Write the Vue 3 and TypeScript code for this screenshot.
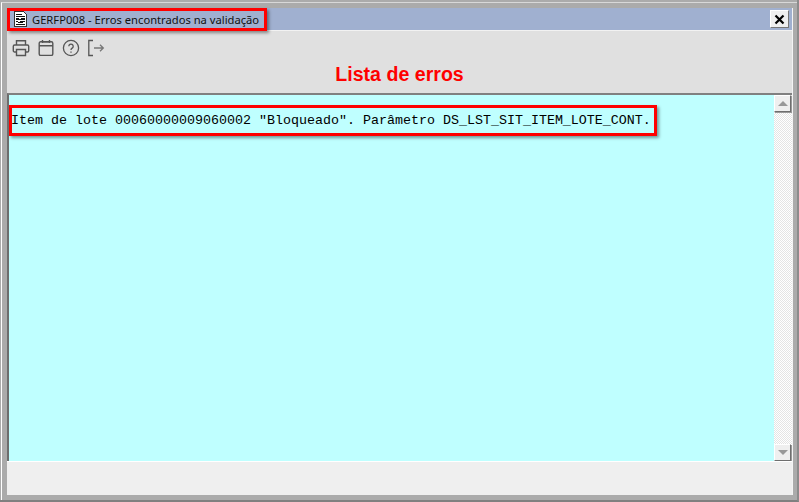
<script setup lang="ts">
const title = 'GERFP008 - Erros encontrados na validação'
const message = 'Item de lote 00060000009060002 "Bloqueado". Parâmetro DS_LST_SIT_ITEM_LOTE_CONT.'
</script>

<template>
  <div class="screen">
    <div class="frame">
      <div class="window">
        <header class="titlebar">
          <svg class="doc" width="13" height="16" viewBox="0 0 13 16" shape-rendering="crispEdges">
            <path d="M0.500 0.500H9.500L12.500 3.500V15.500H0.500Z" fill="#fff" stroke="#333" />
            <path d="M2 3.500h6M2 5.500h9M2 7.500h3M7 7.500h4M2 8.500h9M2 10.500h2M6 10.500h5M4 11.500h5M2 13.500h9" stroke="#111" stroke-width="1" />
          </svg>
          <span class="title-text">{{ title }}</span>
          <button class="close" aria-label="Fechar">
            <svg width="11" height="11" viewBox="0 0 11 11">
              <path d="M1.500 1.500l8 8M9.500 1.500l-8 8" stroke="#000" stroke-width="2.200" />
            </svg>
          </button>
        </header>
        <section class="tools">
          <div class="icons">
            <svg width="18" height="18" viewBox="0 0 18 18" fill="none" stroke="#555" stroke-width="1.400">
              <path d="M4.500 6V1.700h9V6M4.500 13H2.600A1.300 1.300 0 0 1 1.300 11.700V7.300A1.300 1.300 0 0 1 2.600 6h12.800a1.300 1.300 0 0 1 1.300 1.300v4.400a1.300 1.300 0 0 1-1.300 1.300H13.500" />
              <path d="M4.500 10.500h9v6h-9z" />
            </svg>
            <svg width="18" height="18" viewBox="0 0 18 18" fill="none" stroke="#555" stroke-width="1.400">
              <rect x="2.200" y="2.800" width="13.600" height="13.600" rx="1.500" />
              <path d="M2.200 6.800h13.600M5.500 1v3M12.500 1v3M5.500 2.800h7" />
            </svg>
            <svg width="18" height="18" viewBox="0 0 18 18" fill="none" stroke="#555" stroke-width="1.300">
              <circle cx="9" cy="9" r="7.600" />
              <path d="M6.800 7.200a2.200 2.200 0 1 1 3.400 1.900c-.8.500-1.200 1-1.200 1.900" />
              <path d="M9 12.400v1.300" />
            </svg>
            <svg width="18" height="18" viewBox="0 0 18 18" fill="none" stroke="#555" stroke-width="1.300">
              <path d="M6 1.500H1.800v15H6" />
              <path d="M7 9h9M13 5.800L16.300 9 13 12.200" stroke="#777" />
            </svg>
          </div>
          <h1 class="heading">Lista de erros</h1>
        </section>
        <main class="content">
          <p class="message">{{ message }}</p>
          <div class="scrollbar">
            <button class="arrow"><span class="tri up"></span></button>
            <div class="track"></div>
            <button class="arrow"><span class="tri down"></span></button>
          </div>
        </main>
        <footer class="status"></footer>
      </div>
    </div>
    <div class="mark mark-title"></div>
    <div class="mark mark-line"></div>
  </div>
</template>

<style>
html, body { margin: 0; padding: 0; background: #ababab; }
</style>

<style scoped>
.screen {
  position: relative;
  width: 799px;
  height: 502px;
  box-sizing: border-box;
  padding: 2px 0 0 1px;
  background: #ababab;
  border-right: 2px solid #8c8c8c;
  border-bottom: 2px solid #808080;
  overflow: hidden;
  font-family: "Liberation Sans", sans-serif;
}
.frame {
  height: 498px;
  box-sizing: border-box;
  padding: 5px 4px 5px 5px;
  border-left: 1px solid #fff;
  border-top: 1px solid #d8d8d8;
}
.window {
  display: flex;
  flex-direction: column;
  height: 487px;
  box-sizing: border-box;
  border-right: 1px solid #f4f4f4;
  background: #e0e0e0;
}
.titlebar {
  display: flex;
  align-items: center;
  height: 22px;
  flex: none;
  padding: 0 3px 0 7px;
  background: #a0b0d0;
  border-bottom: 1px solid #f2f2f2;
}
.doc { flex: none; margin-right: 5px; }
.title-text {
  font: 11.200px "Noto Sans", sans-serif;
  color: #111;
  white-space: nowrap;
}
.close {
  margin-left: auto;
  width: 19px;
  height: 18px;
  padding: 0;
  display: flex;
  align-items: center;
  justify-content: center;
  background: #efefef;
  border: 1px solid;
  border-color: #fff #777 #777 #fff;
}
.tools {
  flex: none;
  height: 62px;
  box-sizing: border-box;
  padding: 8px 5px 0 5px;
}
.icons { display: flex; gap: 7px; height: 18px; }
.heading {
  margin: 6px 0 0;
  text-align: center;
  font: bold 19.600px "Liberation Sans", sans-serif;
  color: #f00;
  line-height: 22px;
}
.content {
  flex: 1;
  display: flex;
  min-height: 0;
  background: #bfffff;
  border-top: 2px solid #808080;
  border-left: 2px solid #6e6e6e;
}
.message {
  flex: 1;
  margin: 0;
  padding: 17px 0 0 2px;
  font: 13.330px/18px "Liberation Mono", monospace;
  color: #000;
  white-space: pre;
}
.scrollbar {
  flex: none;
  width: 18px;
  display: flex;
  flex-direction: column;
  background-color: #fff;
  background-image:
    linear-gradient(45deg, #e4e4e4 25%, transparent 25%, transparent 75%, #e4e4e4 75%),
    linear-gradient(45deg, #e4e4e4 25%, transparent 25%, transparent 75%, #e4e4e4 75%);
  background-size: 2px 2px;
  background-position: 0 0, 1px 1px;
}
.track { flex: 1; }
.arrow {
  width: 17px;
  height: 17px;
  flex: none;
  padding: 0;
  display: flex;
  align-items: center;
  justify-content: center;
  background: #efefef;
  border: 1px solid;
  border-color: #fff #6e6e6e #6e6e6e #fff;
  box-shadow: 1px 1px 0 #999;
}
.tri { width: 0; height: 0; border-left: 5px solid transparent; border-right: 5px solid transparent; }
.tri.up { border-bottom: 5px solid #999; }
.tri.down { border-top: 5px solid #999; }
.status {
  flex: none;
  height: 33px;
  background: #efefef;
  border-top: 1px solid #fff;
}
.mark {
  position: absolute;
  box-sizing: border-box;
  border: 3px solid #f00;
  box-shadow: 2px 2px 3px rgba(0, 0, 0, 0.4);
}
.mark-title { left: 7px; top: 8px; width: 260px; height: 23px; }
.mark-line { left: 9px; top: 105px; width: 648px; height: 31px; }
</style>
